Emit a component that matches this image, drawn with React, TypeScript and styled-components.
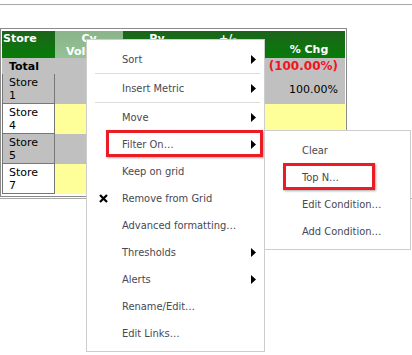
import { Fragment } from 'react';
import styled, { createGlobalStyle } from 'styled-components';

type Tone = 'gray' | 'yellow' | 'white';

const columns = ['Store', 'Cy\nVolume', 'Py\nVolume', '+/-', '% Chg'];

const rows: { name: string; tone: Tone; change?: string; total?: boolean }[] = [
  { name: 'Total', tone: 'gray', change: '(100.00%)', total: true },
  { name: 'Store 1', tone: 'gray', change: '100.00%' },
  { name: 'Store 4', tone: 'yellow' },
  { name: 'Store 5', tone: 'gray' },
  { name: 'Store 7', tone: 'yellow' },
];

type MenuEntry = { label: string; sub?: boolean; cross?: boolean; marked?: boolean; sep?: boolean };

const menu: MenuEntry[] = [
  { label: 'Sort', sub: true, sep: true },
  { label: 'Insert Metric', sub: true, sep: true },
  { label: 'Move', sub: true },
  { label: 'Filter On…', sub: true, marked: true },
  { label: 'Keep on grid' },
  { label: 'Remove from Grid', cross: true },
  { label: 'Advanced formatting…' },
  { label: 'Thresholds', sub: true },
  { label: 'Alerts', sub: true },
  { label: 'Rename/Edit…' },
  { label: 'Edit Links…' },
];

const filterMenu = ['Clear', 'Top N…', 'Edit Condition…', 'Add Condition…'];

const GlobalStyle = createGlobalStyle`
  html, body {
    margin: 0;
    padding: 0;
    background: #fff;
  }
  body {
    font-family: 'DejaVu Sans', Verdana, sans-serif;
  }
`;

const Page = styled.div`
  position: relative;
  width: 412px;
  height: 355px;
  padding-top: 4px;
  box-sizing: border-box;
  overflow: hidden;
`;

const Rule = styled.div<{ $gap: number }>`
  height: 1px;
  margin-top: ${(p) => p.$gap}px;
  background: #a8a8a8;
`;

const GridFrame = styled.div`
  margin-top: 23px;
  width: 343px;
  padding: 2px 1px;
  border: 1px solid #8a8a8a;
`;

const Grid = styled.div`
  display: grid;
  grid-template-columns: 53px 68px 68px 74px 80px;
  grid-template-rows: 27px 16px repeat(4, 30px);
  font-size: 11px;
  line-height: 13px;
  color: #000;
`;

const HeadCell = styled.div<{ $light?: boolean; $bottom?: boolean; $left?: boolean }>`
  display: flex;
  align-items: ${(p) => (p.$bottom ? 'flex-end' : 'flex-start')};
  justify-content: ${(p) => (p.$left ? 'flex-start' : 'center')};
  padding: ${(p) => (p.$bottom ? '0 0 2px 8px' : p.$left ? '1px 0 0 1px' : '1px 0 0')};
  text-align: center;
  white-space: pre-line;
  font-weight: 700;
  color: #fff;
  background: ${(p) =>
    p.$light
      ? 'linear-gradient(#8ab48a, #94c294)'
      : 'linear-gradient(#1d641d, #067c06)'};
`;

const Cell = styled.div<{ $tone: Tone; $right?: boolean; $bold?: boolean; $red?: boolean; $framed?: boolean }>`
  display: flex;
  align-items: center;
  justify-content: ${(p) => (p.$right ? 'flex-end' : 'flex-start')};
  padding: ${(p) => (p.$right ? '0 7px 0 0' : '0 0 0 7px')};
  font-weight: ${(p) => (p.$bold ? 700 : 400)};
  font-size: ${(p) => (p.$red ? '12px' : '11px')};
  color: ${(p) => (p.$red ? '#f0141e' : '#000')};
  background: ${(p) =>
    p.$tone === 'gray' ? '#c0c0c0' : p.$tone === 'yellow' ? '#ffff99' : '#fff'};
  box-shadow: ${(p) =>
    p.$framed ? 'inset 1px 0 #777, inset -1px 0 #777, inset 0 -1px #777' : 'none'};
  white-space: pre-line;
`;

const Menu = styled.div<{ $left: number; $top: number; $width: number }>`
  position: absolute;
  left: ${(p) => p.$left}px;
  top: ${(p) => p.$top}px;
  width: ${(p) => p.$width}px;
  box-sizing: border-box;
  padding: 6px 0 4px;
  background: #fff;
  border: 1px solid #cdcdcd;
  font-family: 'DejaVu Sans Condensed', 'DejaVu Sans', sans-serif;
  font-stretch: condensed;
  font-size: 11px;
  color: #484852;
`;

const Item = styled.div<{ $indent: number; $marked?: boolean; $markLeft?: number; $markWidth?: number }>`
  position: relative;
  display: flex;
  align-items: center;
  height: 27px;
  padding-left: ${(p) => p.$indent}px;
  white-space: nowrap;

  ${(p) =>
    p.$marked &&
    `
    &::after {
      content: '';
      position: absolute;
      left: ${p.$markLeft}px;
      top: -1px;
      bottom: 1px;
      ${p.$markWidth ? `width: ${p.$markWidth}px;` : 'right: 1px;'}
      box-sizing: border-box;
      border: 3px solid #ec1c24;
      box-shadow: 1px 1px 2px rgba(0, 0, 0, 0.35);
    }
  `}
`;

const IconSlot = styled.span`
  position: absolute;
  left: 12px;
  top: 9px;
  display: flex;
`;

const Arrow = styled.svg`
  margin-left: auto;
  margin-right: 8px;
`;

const Separator = styled.div`
  height: 1px;
  margin: 0 4px 1px 8px;
  background: #dcdcdc;
`;

const SubArrow = () => (
  <Arrow width="5" height="9" viewBox="0 0 5 9">
    <polygon points="0,0 5,4.5 0,9" fill="#000" />
  </Arrow>
);

const Cross = () => (
  <svg width="9" height="9" viewBox="0 0 9 9">
    <path d="M1 1L8 8M8 1L1 8" stroke="#000" strokeWidth="2.2" />
  </svg>
);

const App = () => {
  return (
    <Page>
      <GlobalStyle />
      <Rule $gap={0} />
      <GridFrame>
        <Grid>
          {columns.map((c, i) => (
            <HeadCell key={c} $light={i === 1} $left={i === 0} $bottom={i === 4}>
              {c}
            </HeadCell>
          ))}
          {rows.map((r) => (
            <Fragment key={r.name}>
              <Cell
                $tone={r.tone === 'yellow' ? 'white' : 'gray'}
                $bold={r.total}
                $framed={!r.total}
              >
                {r.name.replace(' ', '\n')}
              </Cell>
              <Cell $tone={r.tone} />
              <Cell $tone={r.tone} />
              <Cell $tone={r.tone} />
              <Cell $tone={r.tone} $right $bold={r.total} $red={r.total}>
                {r.change}
              </Cell>
            </Fragment>
          ))}
        </Grid>
      </GridFrame>
      <Rule $gap={1} />

      <Menu $left={86} $top={39} $width={179}>
        {menu.map((m) => (
          <div key={m.label}>
            <Item $indent={35} $marked={m.marked} $markLeft={19}>
              {m.cross && (
                <IconSlot>
                  <Cross />
                </IconSlot>
              )}
              {m.label}
              {m.sub && <SubArrow />}
            </Item>
            {m.sep && <Separator />}
          </div>
        ))}
      </Menu>

      <Menu $left={264} $top={130} $width={147}>
        {filterMenu.map((f) => (
          <Item key={f} $indent={37} $marked={f === 'Top N…'} $markLeft={18} $markWidth={92}>
            {f}
          </Item>
        ))}
      </Menu>
    </Page>
  );
};

export default App;
